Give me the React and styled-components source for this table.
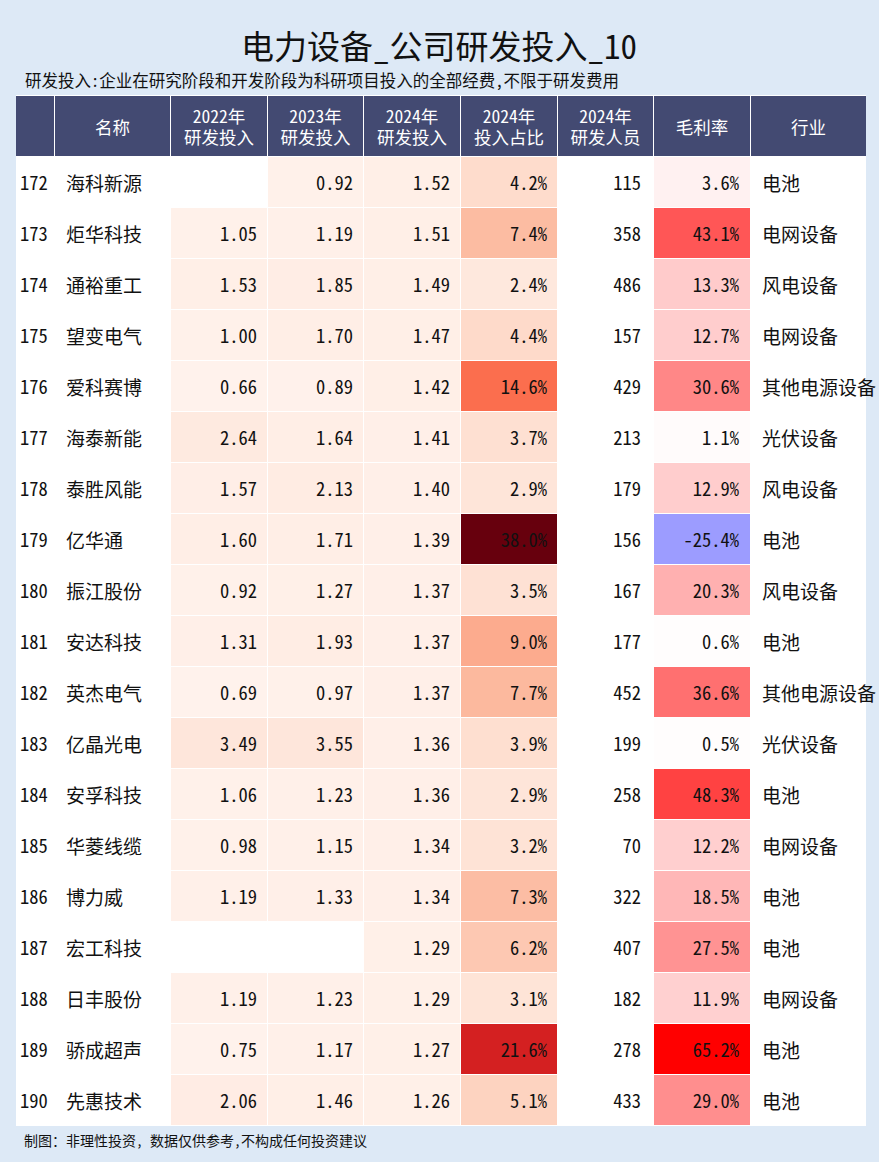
import React from "react";
import styled, { createGlobalStyle } from "styled-components";

const GlobalStyle = createGlobalStyle`
  html, body { margin: 0; padding: 0; background: #dde9f6; }
  body { font-family: "Noto Sans Mono CJK SC", "Noto Sans CJK SC", sans-serif; color: #111; }
`;

const COLS = "38px 115px 96px 95px 96px 96px 95px 96px 115px";

const Page = styled.div`
  width: 879px;
  height: 1162px;
  box-sizing: border-box;
  padding: 25px 13px 0 16px;
  background: #dde9f6;
  overflow: hidden;
`;

const Title = styled.h1`
  margin: 0;
  font-weight: 400;
  font-size: 33px;
  line-height: 40px;
  height: 40px;
  text-align: center;
  color: #111;
  padding-right: 4px;
`;

const Subtitle = styled.div`
  margin-top: 5px;
  font-size: 16.5px;
  line-height: 20px;
  padding-left: 9px;
  color: #111;
`;

const Table = styled.div`
  margin-top: 5px;
  width: 850px;
  background: #fff;
  display: flex;
  flex-direction: column;
  gap: 1px;
  padding-top: 1px;
  padding-bottom: 1px;
`;

const Row = styled.div`
  display: grid;
  grid-template-columns: ${COLS};
  column-gap: 1px;
  height: ${(p) => p.$h}px;
`;

const HeadCell = styled.div`
  background: #434a72;
  color: #fff;
  font-size: 17.5px;
  line-height: 21px;
  display: flex;
  align-items: center;
  justify-content: center;
  text-align: center;
  white-space: pre-line;
`;

const Cell = styled.div`
  background: ${(p) => p.$bg || "#fff"};
  display: flex;
  align-items: center;
  justify-content: ${(p) => (p.$align === "right" ? "flex-end" : "flex-start")};
  padding: ${(p) =>
    p.$align === "right" ? `0 ${p.$pad ?? 10}px 0 0` : `0 0 0 ${p.$pad ?? 11}px`};
  font-size: ${(p) => (p.$cjk ? 19 : 18.5)}px;
  white-space: nowrap;
  overflow: visible;
  color: #111;
`;

const Footer = styled.div`
  margin-top: 4px;
  padding-left: 8px;
  font-size: 14px;
  line-height: 20px;
  color: #111;
`;

const REDS = [
  [255, 245, 240],
  [254, 224, 210],
  [252, 187, 161],
  [252, 146, 114],
  [251, 106, 74],
  [239, 59, 44],
  [203, 24, 29],
  [165, 15, 21],
  [103, 0, 13],
];

function reds(t) {
  t = Math.max(0, Math.min(1, t));
  const x = t * (REDS.length - 1);
  const i = Math.min(REDS.length - 2, Math.floor(x));
  const f = x - i;
  const a = REDS[i];
  const b = REDS[i + 1];
  const c = a.map((v, k) => Math.round(v + (b[k] - v) * f));
  return `rgb(${c[0]},${c[1]},${c[2]})`;
}

function bwr(v, vmax) {
  let t = 0.5 + v / (2 * vmax);
  t = Math.max(0, Math.min(1, t));
  let r, g, b;
  if (t < 0.5) {
    r = g = 2 * t;
    b = 1;
  } else {
    r = 1;
    g = b = 2 * (1 - t);
  }
  return `rgb(${Math.round(r * 255)},${Math.round(g * 255)},${Math.round(b * 255)})`;
}

const rows = [
  [172, "海科新源", "", "0.92", "1.52", "4.2", 115, "3.6", "电池"],
  [173, "炬华科技", "1.05", "1.19", "1.51", "7.4", 358, "43.1", "电网设备"],
  [174, "通裕重工", "1.53", "1.85", "1.49", "2.4", 486, "13.3", "风电设备"],
  [175, "望变电气", "1.00", "1.70", "1.47", "4.4", 157, "12.7", "电网设备"],
  [176, "爱科赛博", "0.66", "0.89", "1.42", "14.6", 429, "30.6", "其他电源设备"],
  [177, "海泰新能", "2.64", "1.64", "1.41", "3.7", 213, "1.1", "光伏设备"],
  [178, "泰胜风能", "1.57", "2.13", "1.40", "2.9", 179, "12.9", "风电设备"],
  [179, "亿华通", "1.60", "1.71", "1.39", "38.0", 156, "-25.4", "电池"],
  [180, "振江股份", "0.92", "1.27", "1.37", "3.5", 167, "20.3", "风电设备"],
  [181, "安达科技", "1.31", "1.93", "1.37", "9.0", 177, "0.6", "电池"],
  [182, "英杰电气", "0.69", "0.97", "1.37", "7.7", 452, "36.6", "其他电源设备"],
  [183, "亿晶光电", "3.49", "3.55", "1.36", "3.9", 199, "0.5", "光伏设备"],
  [184, "安孚科技", "1.06", "1.23", "1.36", "2.9", 258, "48.3", "电池"],
  [185, "华菱线缆", "0.98", "1.15", "1.34", "3.2", 70, "12.2", "电网设备"],
  [186, "博力威", "1.19", "1.33", "1.34", "7.3", 322, "18.5", "电池"],
  [187, "宏工科技", "", "", "1.29", "6.2", 407, "27.5", "电池"],
  [188, "日丰股份", "1.19", "1.23", "1.29", "3.1", 182, "11.9", "电网设备"],
  [189, "骄成超声", "0.75", "1.17", "1.27", "21.6", 278, "65.2", "电池"],
  [190, "先惠技术", "2.06", "1.46", "1.26", "5.1", 433, "29.0", "电池"],
];

const headers = [
  "",
  "名称",
  "2022年\n研发投入",
  "2023年\n研发投入",
  "2024年\n研发投入",
  "2024年\n投入占比",
  "2024年\n研发人员",
  "毛利率",
  "行业",
];

const rdColor = (v) => (v === "" ? "#fff" : reds(parseFloat(v) / 40));

export default function App() {
  return (
    <>
      <GlobalStyle />
      <Page>
        <Title>电力设备_公司研发投入_10</Title>
        <Subtitle>研发投入:企业在研究阶段和开发阶段为科研项目投入的全部经费,不限于研发费用</Subtitle>
        <Table>
          <Row $h={60}>
            {headers.map((h, i) => (
              <HeadCell key={i}>{h}</HeadCell>
            ))}
          </Row>
          {rows.map((r) => (
            <Row key={r[0]} $h={50}>
              <Cell $pad={4}>{r[0]}</Cell>
              <Cell $cjk>{r[1]}</Cell>
              <Cell $align="right" $bg={rdColor(r[2])}>{r[2]}</Cell>
              <Cell $align="right" $bg={rdColor(r[3])}>{r[3]}</Cell>
              <Cell $align="right" $bg={rdColor(r[4])}>{r[4]}</Cell>
              <Cell $align="right" $bg={reds(parseFloat(r[5]) / 30)}>{r[5]}%</Cell>
              <Cell $align="right" $pad={12}>{r[6]}</Cell>
              <Cell $align="right" $pad={11} $bg={bwr(parseFloat(r[7]), 65.2)}>{r[7]}%</Cell>
              <Cell $cjk>{r[8]}</Cell>
            </Row>
          ))}
        </Table>
        <Footer>制图：非理性投资, 数据仅供参考,不构成任何投资建议</Footer>
      </Page>
    </>
  );
}
